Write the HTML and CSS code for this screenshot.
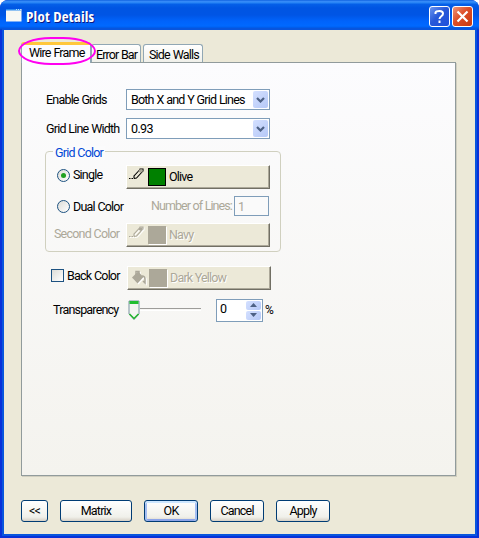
FILE: index.html
```
<!DOCTYPE html>
<html lang="en">
<head>
<meta charset="utf-8">
<title>Plot Details</title>
<link rel="stylesheet" href="styles.css">
</head>
<body>
<svg class="defs" width="0" height="0">
  <symbol id="pencil" viewBox="0 0 15 12"><path d="M0 10.500h1.500M2.500 10.500h1.500M5 10.500V8L11 1.500M5 10.500l2.500-.5L13.500 3.500M10.500 1h3.500v2.500" fill="none" stroke="currentColor" stroke-width="1.100"/><path d="M10.500 1.500h3v2l-2 1.500-2-1.500z" fill="#aca899"/></symbol>
  <symbol id="chevron" viewBox="0 0 9 6"><path d="M1 1l3.500 3.500L8 1" fill="none" stroke="#4d6185" stroke-width="2.200"/></symbol>
</svg>
<div class="window">
  <header class="titlebar">
    <svg class="appicon" width="16" height="13" viewBox="0 0 16 13"><path fill="#f8f8f4" d="M0 0h15.500v12.500H0z"/><path fill="#2d8cf0" d="M0 0h15v1.500H0z"/><path fill="#b5dcff" d="M10 0h1v1h-1zM12 0h1v1h-1zM14 0h1v1h-1z"/></svg>
    <h1>Plot Details</h1>
    <button class="cap help"><svg width="19" height="19" viewBox="0 0 19 19"><path d="M5.500 7V5.500Q6 4 9.500 4t3.500 2.500q0 1.500-1.700 2.700T9.500 12M9.500 13.500V16" fill="none" stroke="#fff" stroke-width="2"/></svg></button>
    <button class="cap close"><svg width="19" height="19" viewBox="0 0 19 19"><path d="M4.500 4.500l10 10m0-10l-10 10" fill="none" stroke="#fff" stroke-width="2.200"/></svg></button>
  </header>
  <main class="client">
    <nav class="tabs">
      <span class="tab active">Wire Frame<i class="ring"></i></span>
      <span class="tab error">Error Bar</span>
      <span class="tab side">Side Walls</span>
    </nav>
    <section class="panel">
      <div class="row first"><label class="wide">Enable Grids</label><div class="combo"><span>Both X and Y Grid Lines</span><b><svg width="9" height="6"><use href="#chevron"/></svg></b></div></div>
      <div class="row second"><label class="wide">Grid Line Width</label><div class="combo value"><span>0.93</span><b><svg width="9" height="6"><use href="#chevron"/></svg></b></div></div>
      <div class="group">
        <div class="legend"><span>Grid Color</span></div>
        <div class="row single"><i class="radio on"></i><label class="opt">Single</label><button class="color"><svg class="pen" width="15" height="12"><use href="#pencil"/></svg><i class="swatch green"></i><span>Olive</span></button></div>
        <div class="row dual"><i class="radio"></i><label class="opt">Dual Color</label><label class="off lines">Number of Lines:</label><div class="num off">1</div></div>
        <div class="row secondcolor"><label class="off">Second Color</label><button class="color off"><svg class="pen" width="15" height="12"><use href="#pencil"/></svg><i class="swatch"></i><span>Navy</span></button></div>
      </div>
      <div class="row back"><i class="check"></i><label>Back Color</label><button class="color off"><svg class="bucket" width="15" height="15" viewBox="0 0 15 15"><path d="M1 7.500l6-6 5.500 5.500-6 6.500z" fill="#aca899"/><path d="M5 5V1.500h3v4M11 6q3 0 3 3v4l-2-2" fill="none" stroke="#aca899" stroke-width="1.500"/></svg><i class="swatch"></i><span>Dark Yellow</span></button></div>
      <div class="row trans"><label>Transparency</label>
        <div class="slider"><svg width="12" height="21" viewBox="0 0 12 21"><path d="M1 1h10v13l-5 5.500L1 14z" fill="#f4f4f2" stroke="#7894a1"/><path d="M1.500 1h9v3h-9z" fill="#21be30"/><path d="M1.500 14L6 18.500l4.500-4.500" fill="none" stroke="#21b52c" stroke-width="1.500"/></svg><i></i></div>
        <div class="spin"><span>0</span><div><b><svg width="7" height="4"><path d="M0 4l3.500-4L7 4z" fill="#4d6185"/></svg></b><b><svg width="7" height="4"><path d="M0 0l3.500 4L7 0z" fill="#4d6185"/></svg></b></div></div><span class="pct">%</span>
      </div>
    </section>
    <footer class="actions"><button>&lt;&lt;</button><button class="matrix">Matrix</button><button class="ok">OK</button><button>Cancel</button><button>Apply</button></footer>
  </main>
</div>
</body>
</html>
```

FILE: styles.css
```
* { box-sizing: border-box; }
body { margin: 0; background: #fff; font: 12.5px/16px Roboto, "Liberation Sans", sans-serif; letter-spacing: -.8px; word-spacing: .4px; color: #000; white-space: nowrap; overflow: hidden; }
button { font: inherit; letter-spacing: inherit; color: inherit; padding: 0; margin: 0; }
label { flex: none; }
svg { display: block; flex: none; }
i { font-style: normal; flex: none; }
.defs { position: absolute; }
.window { width: 479px; height: 538px; border-radius: 8px 8px 0 0; background: #0831d9; overflow: hidden; display: flex; flex-direction: column; }
.titlebar { height: 30px; flex: none; display: flex; align-items: center; padding: 2px 6px 0; background: linear-gradient(#0054d8 0, #3a8cf8 1px, #2584f5 3px, #0560e8 4px, #0055e2 8px, #0055e5 15px, #0063fb 21px, #0069ff 26px, #0051d8 29px, #0039c4 30px); }
.appicon { margin-top: -1px; }
h1 { flex: 1; margin: 0 0 0 4px; font: bold 15px/20px "Open Sans", sans-serif; font-stretch: condensed; letter-spacing: .2px; color: #fff; text-shadow: 1px 1px #0a1883; }
.cap { width: 21px; height: 21px; border: 1px solid #fff; border-radius: 3px; }
.help { background: linear-gradient(135deg, #6a94f0, #2858d8 45%, #1e50dc); }
.close { margin-left: 2px; background: linear-gradient(135deg, #f09478, #dc4d28 45%, #c93a10); }
.client { flex: 1; margin: 0 4px 4px; background: #ece9d8; padding: 11px 19px 0 17px; box-shadow: 0 0 0 2px #0855dd; }
.tabs { height: 21px; display: flex; align-items: flex-end; }
.tab { position: relative; height: 18px; border: 1px solid #91a7b4; border-bottom: 0; border-radius: 3px 3px 0 0; background: linear-gradient(#fff, #f0f0ea); line-height: 19px; }
.active { width: 70px; height: 21px; padding-left: 7px; background: #fcfcfe; border-top: 3px solid #ffc73c; line-height: 16px; z-index: 1; margin-bottom: -1px; }
.error { width: 50px; padding-left: 4px; letter-spacing: -.9px; }
.side { width: 60px; margin-left: 2px; padding-left: 5px; }
.ring { position: absolute; left: -4px; top: -8px; width: 78px; height: 28px; border: 2px solid #ff00f0; border-radius: 33px / 14px; }
.panel { width: 435px; height: 414px; border: 1px solid #919b9c; background: linear-gradient(#fcfcfe, #f4f3ee); box-shadow: 1px 1px #d0cebf; }
.row { display: flex; align-items: center; }
.first { margin: 26px 0 0 24px; height: 21px; }
.second { margin: 8px 0 0 24px; height: 21px; }
.wide { width: 80px; }
.combo { width: 144px; height: 21px; border: 1px solid #7f9db9; background: #fff; display: flex; justify-content: space-between; align-items: center; padding: 1px 1px 1px 4px; }
.value { letter-spacing: -.6px; }
.combo b { width: 15px; height: 17px; border-radius: 2px; background: linear-gradient(135deg, #d4e0ff, #b5c8f7); display: grid; place-items: center; }
.group { width: 236px; height: 101px; margin: 12px 0 0 23px; border: 1px solid #d0d0bf; border-radius: 4px; padding-left: 8px; }
.legend { height: 13px; margin-top: -7px; }
.legend span { display: inline-block; height: 14px; line-height: 14px; padding: 0 2px; margin-left: -1px; background: #fbfbfc; color: #0046d5; }
.single { height: 24px; margin-top: 7px; padding-left: 3px; }
.single .radio, .single .opt { margin-top: -4px; }
.dual { height: 21px; margin-top: 6px; padding-left: 3px; }
.dual .radio, .dual .opt { margin-top: 2px; }
.secondcolor { height: 24px; margin-top: 7px; }
.secondcolor label { width: 72px; margin-top: -3px; }
.radio { width: 13px; height: 13px; border: 1px solid #1d5281; border-radius: 50%; background: linear-gradient(135deg, #dcdcd7, #fff); display: grid; place-items: center; }
.on::after { content: ""; width: 5px; height: 5px; border-radius: 50%; background: #21a121; }
.opt { width: 53px; margin-left: 3px; }
.color { width: 144px; height: 24px; border: 1px solid; border-color: #fff #716f64 #716f64 #fff; box-shadow: inset -1px -1px #aca899; background: #ece9d8; display: flex; align-items: center; }
.pen { margin: -6px 0 0 2px; }
.swatch { width: 18px; height: 18px; margin-left: 4px; background: #aca899; }
.green { background: #008000; border: 1px solid #000; }
.off .swatch { box-shadow: 1px 1px #fff; }
.off svg { filter: drop-shadow(1px 1px #fff); }
.color span { margin-left: 3px; }
.off { color: #aca899; }
.color.off { text-shadow: 1px 1px #fff; }
.lines { width: 83px; margin-left: 25px; letter-spacing: -.95px; }
.num { width: 35px; height: 20px; border: 1px solid #7f9db9; padding-left: 3px; line-height: 19px; background: #fafafa; }
.back { height: 24px; margin: 14px 0 0 29px; }
.check { width: 13px; height: 13px; border: 1px solid #1d5281; background: linear-gradient(135deg, #dcdcd7, #fff); margin-top: -6px; }
.back label { width: 60px; margin: -5px 0 0 3px; }
.bucket { margin: -2px 0 0 3px; }
.bucket + i { margin-left: 3px; }
.trans { height: 24px; margin: 8px 0 0 31px; }
.trans label { width: 75px; }
.slider { display: flex; }
.slider i { width: 61px; height: 3px; margin-top: 8px; border-top: 1px solid #9d9c99; border-bottom: 1px solid #fff; }
.spin { width: 47px; height: 23px; margin-left: 15px; border: 1px solid #7f9db9; background: #fff; display: flex; justify-content: space-between; padding: 1px 1px 1px 3px; }
.spin div { display: grid; gap: 1px; width: 15px; }
.spin b { background: linear-gradient(135deg, #d4e0ff, #b5c8f7); border-radius: 2px; display: grid; place-items: center; }
.pct { margin-left: 2px; font-size: 12px; }
.actions { display: flex; gap: 12px; margin-top: 24px; }
.actions button { width: 54px; height: 22px; border: 1px solid #003c74; border-radius: 3px; background: linear-gradient(#fff, #f0f0ea 80%, #d6d0c5); }
.actions button:first-child { width: 27px; }
.actions .matrix { width: 72px; }
.actions .ok { box-shadow: inset 0 2px #cee7ff, inset 2px 0 #a4bef2, inset -2px 0 #a4bef2, inset 0 -2px #8ca4e8; }
```
